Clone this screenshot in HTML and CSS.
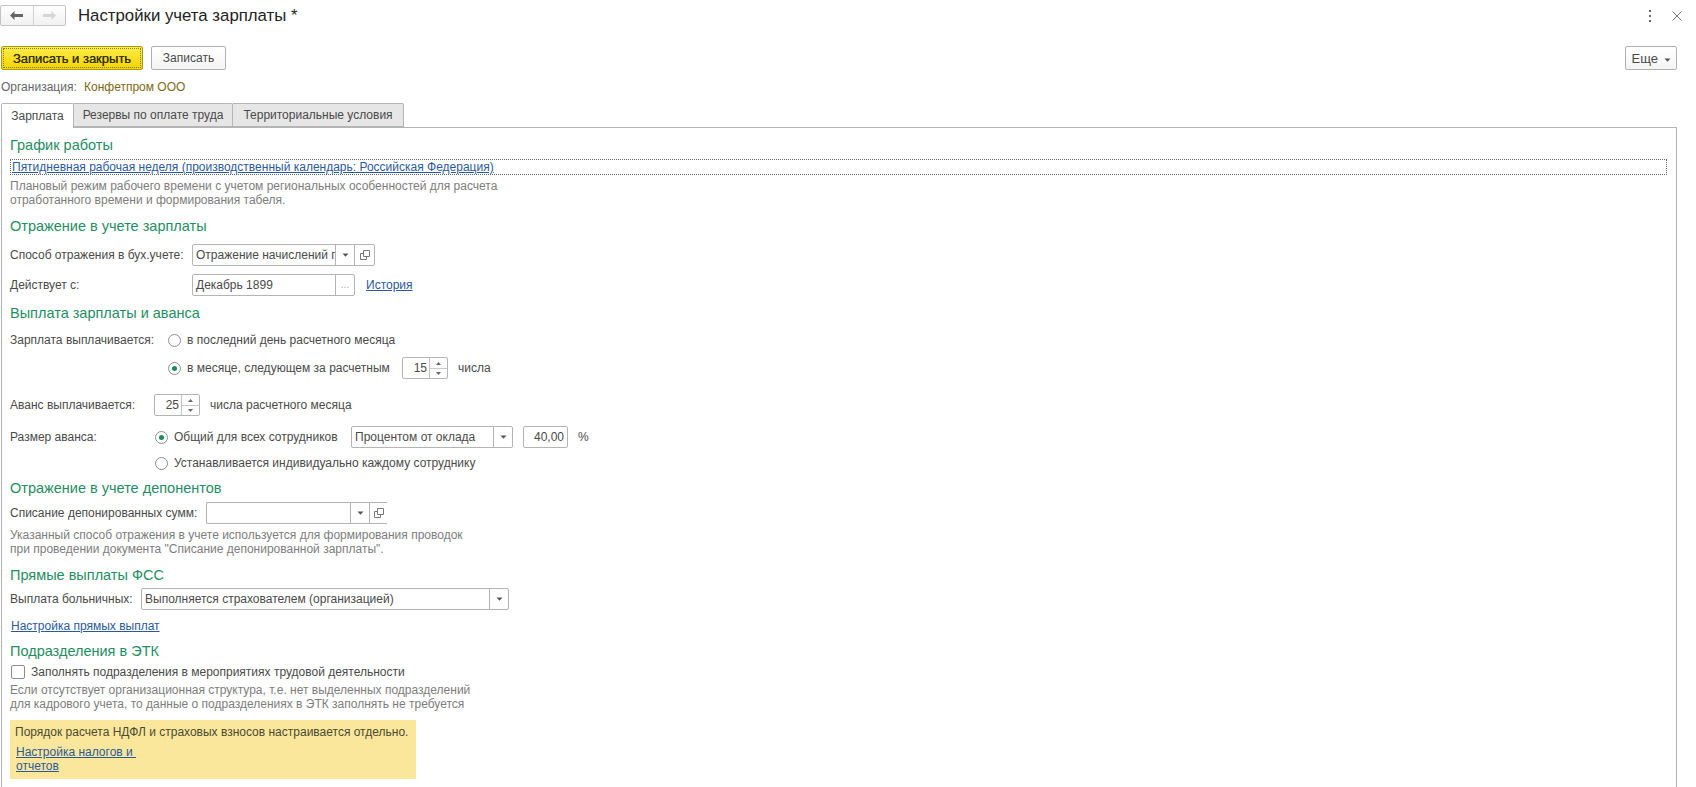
FILE: index.html
```html
<!DOCTYPE html>
<html lang="ru">
<head>
<meta charset="utf-8">
<title>Настройки учета зарплаты</title>
<link rel="stylesheet" href="styles.css">
</head>
<body>
<svg class="defs" width="0" height="0">
  <symbol id="tri" viewBox="0 0 7 4"><path d="M0.5 0.5h6L3.5 3.8z" fill="#555"/></symbol>
  <symbol id="open" viewBox="0 0 10 10"><path d="M3.5 .5h6v6h-6z M.5 3.5h3 M.5 3.5v6h6v-3" fill="none" stroke="#777" stroke-width="1"/></symbol>
  <symbol id="up" viewBox="0 0 5 3"><path d="M2.5 0L5 3H0z" fill="#666"/></symbol>
  <symbol id="down" viewBox="0 0 5 3"><path d="M0 0h5L2.5 3z" fill="#666"/></symbol>
</svg>
<header class="topbar">
  <div class="nav">
    <span class="nav-btn"><svg width="13" height="9" viewBox="0 0 13 9"><path d="M0 4.5L4.5 0v3H13v3H4.5v3z" fill="#666"/></svg></span>
    <span class="nav-btn"><svg width="13" height="9" viewBox="0 0 13 9"><path d="M13 4.5L8.500 0v3H0v3h8.500v3z" fill="#d6d6d6"/></svg></span>
  </div>
  <h1 class="title">Настройки учета зарплаты *</h1>
  <div class="win-icons">
    <svg width="4" height="12" viewBox="0 0 4 12"><path d="M1 0h2v2H1zM1 5h2v2H1zM1 10h2v2H1z" fill="#666"/></svg>
    <svg width="10" height="10" viewBox="0 0 10 10"><path d="M.5.5l9 9M9.500.5l-9 9" stroke="#777" stroke-width="1" fill="none"/></svg>
  </div>
</header>
<div class="actions">
  <button class="btn btn-primary">Записать и закрыть</button>
  <button class="btn btn-second">Записать</button>
  <button class="btn btn-more">Еще <svg width="7" height="4"><use href="#tri"/></svg></button>
</div>
<div class="org"><span class="org-label">Организация:</span><span class="org-value">Конфетпром ООО</span></div>
<nav class="tabs">
  <span class="tab tab-active">Зарплата</span>
  <span class="tab tab-w2">Резервы по оплате труда</span>
  <span class="tab tab-w3">Территориальные условия</span>
</nav>
<main class="panel">
  <h2 class="sec mt8">График работы</h2>
  <div class="focus-link mt5"><a href="#">Пятидневная рабочая неделя (производственный календарь: Российская Федерация)</a></div>
  <p class="note mt4">Плановый режим рабочего времени с учетом региональных особенностей для расчета<br>отработанного времени и формирования табеля.</p>

  <h2 class="sec mt10">Отражение в учете зарплаты</h2>
  <div class="row mt9">
    <span class="label lw182">Способ отражения в бух.учете:</span>
    <span class="field fw183">
      <span class="value">Отражение начислений г</span>
      <span class="cell"><svg width="7" height="4"><use href="#tri"/></svg></span>
      <span class="cell cell20"><svg width="10" height="10"><use href="#open"/></svg></span>
    </span>
  </div>
  <div class="row mt8">
    <span class="label lw182">Действует с:</span>
    <span class="field fw163">
      <span class="value">Декабрь 1899</span>
      <span class="cell dots">...</span>
    </span>
    <a href="#" class="hist">История</a>
  </div>

  <h2 class="sec mt8">Выплата зарплаты и аванса</h2>
  <div class="row mt7">
    <span class="label lw158">Зарплата выплачивается:</span>
    <label class="radio"><span class="dot"></span>в последний день расчетного месяца</label>
  </div>
  <div class="row mt6 indent158">
    <label class="radio"><span class="dot dot-on"></span>в месяце, следующем за расчетным</label>
    <span class="spin"><span class="spin-val">15</span><span class="spin-btns"><svg width="5" height="3"><use href="#up"/></svg><svg width="5" height="3"><use href="#down"/></svg></span></span>
    <span class="after">числа</span>
  </div>
  <div class="row mt15">
    <span class="label lw144">Аванс выплачивается:</span>
    <span class="spin"><span class="spin-val">25</span><span class="spin-btns"><svg width="5" height="3"><use href="#up"/></svg><svg width="5" height="3"><use href="#down"/></svg></span></span>
    <span class="after">числа расчетного месяца</span>
  </div>
  <div class="row mt10">
    <span class="label lw145">Размер аванса:</span>
    <label class="radio"><span class="dot dot-on"></span>Общий для всех сотрудников</label>
    <span class="field fw162">
      <span class="value">Процентом от оклада</span>
      <span class="cell"><svg width="7" height="4"><use href="#tri"/></svg></span>
    </span>
    <span class="field num"><span class="value right">40,00</span></span>
    <span class="after">%</span>
  </div>
  <div class="row mt4 indent145">
    <label class="radio"><span class="dot"></span>Устанавливается индивидуально каждому сотруднику</label>
  </div>

  <h2 class="sec mt5">Отражение в учете депонентов</h2>
  <div class="row mt5">
    <span class="label lw196">Списание депонированных сумм:</span>
    <span class="field fw181 open-right">
      <span class="value"></span>
      <span class="cell"><svg width="7" height="4"><use href="#tri"/></svg></span>
      <span class="cell cell18"><svg width="10" height="10"><use href="#open"/></svg></span>
    </span>
  </div>
  <p class="note mt4">Указанный способ отражения в учете используется для формирования проводок<br>при проведении документа "Списание депонированной зарплаты".</p>

  <h2 class="sec mt10">Прямые выплаты ФСС</h2>
  <div class="row mt4">
    <span class="label lw131">Выплата больничных:</span>
    <span class="field fw368">
      <span class="value">Выполняется страхователем (организацией)</span>
      <span class="cell"><svg width="7" height="4"><use href="#tri"/></svg></span>
    </span>
  </div>
  <p class="plain mt9 ml1"><a href="#">Настройка прямых выплат</a></p>

  <h2 class="sec mt9">Подразделения в ЭТК</h2>
  <label class="check mt5"><span class="box"></span>Заполнять подразделения в мероприятиях трудовой деятельности</label>
  <p class="note mt4">Если отсутствует организационная структура, т.е. нет выделенных подразделений<br>для кадрового учета, то данные о подразделениях в ЭТК заполнять не требуется</p>

  <aside class="hint mt9">
    <p class="hint-text">Порядок расчета НДФЛ и страховых взносов настраивается отдельно.</p>
    <p class="hint-link"><a href="#">Настройка налогов и&nbsp;<br>отчетов</a></p>
  </aside>
</main>
</body>
</html>
```
FILE: styles.css
```css
* { box-sizing: border-box; }
html, body { margin: 0; height: 787px; overflow: hidden; background: #fff; }
body { font: 12px/14px "Liberation Sans", Arial, sans-serif; color: #4a4a4a; }
p, h1, h2 { margin: 0; font-weight: 400; }
a { color: #2b5a9c; text-decoration: underline; }
.defs { position: absolute; }

.topbar { display: flex; height: 32px; padding-top: 5px; }
.nav { display: flex; width: 66px; height: 21px; border: 1px solid #c4c4c4; border-radius: 2px; background: linear-gradient(#fff, #f1f1f1); }
.nav-btn { flex: 1; display: flex; align-items: center; justify-content: center; }
.nav-btn + .nav-btn { border-left: 1px solid #d2d2d2; }
.title { margin: 1px 0 0 12px; font-size: 16.8px; line-height: 20px; color: #222; }
.win-icons { margin-left: auto; width: 48px; display: flex; gap: 20px; height: 21px; align-items: center; }

.actions { display: flex; margin: 14px 19px 0 1px; height: 24px; }
.btn { font: 12px "Liberation Sans", Arial, sans-serif; height: 24px; padding: 0; border: 1px solid #b0b0b0; border-radius: 2px; background: linear-gradient(#fff, #f4f4f4); color: #4a4a4a; }
.btn-primary { width: 142px; font-size: 13px; color: #33300a; border-color: #a89a1c; background: linear-gradient(#fcec4a, #f5d400); outline: 1px dotted #8a7d10; outline-offset: -3px; text-shadow: 0 0 .4px #33300a; }
.btn-second { width: 75px; margin-left: 8px; }
.btn-more { width: 52px; margin-left: auto; font-size: 13px; }
.btn-more svg { margin-left: 2px; vertical-align: 1px; }

.org { margin: 10px 0 0 1px; }
.org-label { display: inline-block; width: 83px; color: #666; }
.org-value { color: #7a6a14; }

.tabs { display: flex; height: 24px; margin: 9px 0 0 1px; position: relative; z-index: 1; }
.tab { display: flex; align-items: center; justify-content: center; border: 1px solid #b4b4b4; border-left: 0; background: #e6e6e6; border-radius: 0 2px 0 0; }
.tab-active { width: 73px; border-left: 1px solid #b4b4b4; border-bottom: 0; background: #fff; height: 25px; border-radius: 2px 2px 0 0; }
.tab-w2 { width: 159px; }
.tab-w3 { width: 171px; }

.panel { width: 1676px; height: 660px; margin-left: 1px; padding: 0 8px 0 8px; border: 1px solid #b4b4b4; border-bottom: 0; }
.sec { font-size: 14.5px; line-height: 18px; color: #1f8d63; }
.focus-link { height: 16px; margin-right: 1px; padding-left: 1px; line-height: 14px; border: 1px dotted #666; }
.note { color: #7d7d7d; }
.row { display: flex; align-items: center; height: 22px; }
.label { flex: none; }
.lw182 { width: 182px; }
.lw158 { width: 158px; }
.lw144 { width: 144px; }
.lw145 { width: 145px; }
.lw196 { width: 196px; }
.lw131 { width: 131px; }
.indent158 { padding-left: 158px; }
.indent145 { padding-left: 145px; }

.field { display: flex; height: 22px; flex: none; border: 1px solid #b4b4b4; border-radius: 2px; background: #fff; }
.value { flex: 1; min-width: 0; padding-left: 3px; line-height: 20px; white-space: nowrap; overflow: hidden; }
.right { text-align: right; padding: 0 3px 0 0; }
.cell { flex: none; width: 19px; display: flex; align-items: center; justify-content: center; border-left: 1px solid #b4b4b4; }
.cell20 { width: 20px; }
.cell18 { width: 18px; }
.dots { color: #aaa; font-size: 10px; }
.fw183 { width: 183px; }
.fw163 { width: 163px; }
.fw162 { width: 162px; }
.fw181 { width: 181px; }
.fw368 { width: 368px; }
.num { width: 45px; margin-left: 10px; }
.open-right { border-right: 0; border-radius: 2px 0 0 2px; }
.hist { margin-left: 11px; }

.radio { display: flex; align-items: center; white-space: nowrap; flex: none; min-width: 196px; }
.row.indent158 .radio { min-width: 234px; }
.dot { flex: none; width: 13px; height: 13px; margin-right: 6px; border: 1px solid #8d8d8d; border-radius: 50%; background: #fff; position: relative; }
.dot-on::after { content: ""; position: absolute; left: 3px; top: 3px; width: 5px; height: 5px; border-radius: 50%; background: #1c8a60; }

.spin { display: flex; flex: none; width: 46px; height: 22px; border: 1px solid #b4b4b4; border-radius: 2px; }
.spin-val { flex: none; width: 26px; padding-right: 2px; text-align: right; line-height: 21px; }
.spin-btns { flex: 1; display: flex; flex-direction: column; align-items: center; justify-content: space-around; border-left: 1px solid #c4c4c4; background: linear-gradient(#c9c9c9, #c9c9c9) center / 100% 1px no-repeat; }
.after { margin-left: 10px; }

.plain { height: 14px; }
.ml1 { margin-left: 1px; }
.check { display: flex; align-items: center; height: 14px; margin-left: 1px; }
.box { width: 14px; height: 14px; margin-right: 6px; border: 1px solid #8d8d8d; border-radius: 2px; }

.hint { width: 406px; height: 59px; padding: 5px 5px 0; background: #fbe79b; color: #4a4a33; }
.hint-link { margin: 6px 0 0 1px; }

.mt4 { margin-top: 4px; }
.mt5 { margin-top: 5px; }
.mt6 { margin-top: 6px; }
.mt7 { margin-top: 7px; }
.mt8 { margin-top: 8px; }
.mt9 { margin-top: 9px; }
.mt10 { margin-top: 10px; }
.mt15 { margin-top: 15px; }
```
